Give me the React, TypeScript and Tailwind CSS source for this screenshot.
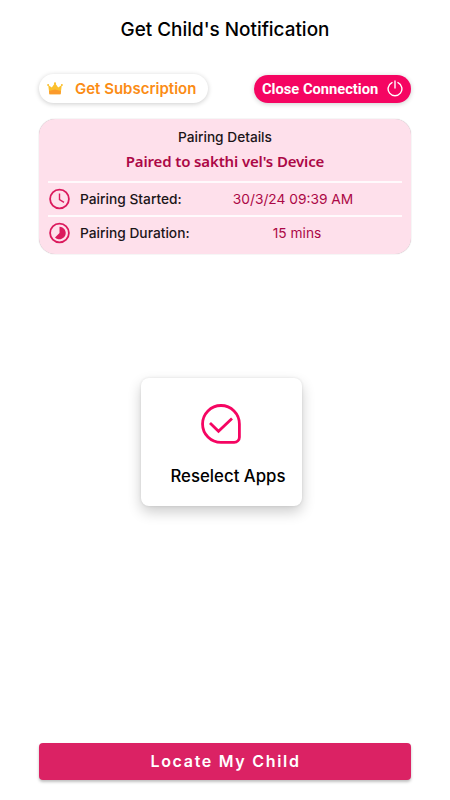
import React from 'react'

const CrownIcon = () => (
    <svg width="16" height="13" viewBox="0 0 16 13" className="shrink-0">
        <path d="M1.2 3 4.8 5.6 8 1l3.2 4.6L14.8 3l-1.2 9.3H2.4z" fill="#fbc02d" />
        <path d="M2 9 8 7.6 14 9l-.5 3.3h-11z" fill="#fb9a2c" />
        <circle cx="1.1" cy="3" r="1" fill="#fbc02d" />
        <circle cx="8" cy="1.3" r="1.1" fill="#fbc02d" />
        <circle cx="14.9" cy="3" r="1" fill="#fbc02d" />
    </svg>
)

const PowerIcon = () => (
    <svg width="16" height="17" viewBox="0 0 16 17" fill="none" stroke="#fff" strokeWidth="1.4" strokeLinecap="round" className="shrink-0">
        <path d="M5 2.6A6.9 6.9 0 1 0 11 2.6" />
        <path d="M8 .9v7.2" />
    </svg>
)

const ClockIcon = () => (
    <svg width="22" height="22" viewBox="0 0 22 22" fill="none" stroke="#db1a5d" className="shrink-0">
        <circle cx="10.5" cy="11" r="9.4" strokeWidth="1.8" />
        <path d="M10.5 5.6v5.9l4.5 2.8" strokeWidth="1.4" />
    </svg>
)

const DurationIcon = () => (
    <svg width="22" height="22" viewBox="0 0 22 22" fill="none" className="shrink-0">
        <circle cx="10.5" cy="11" r="9.4" stroke="#db1a5d" strokeWidth="1.8" />
        <path d="M10.5 11V4.7A6.3 6.3 0 1 1 6 15.5z" fill="#db1a5d" />
    </svg>
)

const CheckBubbleIcon = () => (
    <svg width="40" height="40" viewBox="0 0 40 40" fill="none" stroke="#f50562" strokeWidth="2.8">
        <path d="M20 1.5A18.4 18.4 0 0 0 20 38.4H33.2A5.2 5.2 0 0 0 38.4 33.2V20A18.4 18.4 0 0 0 20 1.5z" />
        <path d="M9 19 17.5 27.2 31 14.4" />
    </svg>
)

type PairingRowProps = {
    icon: React.ReactNode
    label: string
    children: React.ReactNode
}

const PairingRow = ({ icon, label, children }: PairingRowProps) => (
    <div className="flex h-[34px] items-center border-t-2 border-[#fffafc] pl-px text-[13.75px] whitespace-nowrap">
        {icon}
        <span className="mt-px ml-[9px] w-[122px] font-medium text-[#1c1519]">{label}</span>
        <span className="mt-px w-[182px] text-center text-[#ac0846]">{children}</span>
    </div>
)

const App = () => {
    return (
        <div className="flex h-[800px] w-[450px] flex-col bg-white px-[39px] font-['Inter',sans-serif]">
            <h1 className="mt-4 h-7 text-center text-[18.9px] leading-7 font-medium whitespace-nowrap text-black">
                Get Child's Notification
            </h1>

            {/* Top actions */}
            <div className="mt-[30px] flex h-[29px] items-center justify-between whitespace-nowrap">
                <button className="flex h-[29px] w-[169px] items-center rounded-full bg-white pl-2 text-[15px] font-semibold text-[#fb8c14] shadow-[0_1px_5px_rgba(0,0,0,0.2)]">
                    <CrownIcon />
                    <span className="mt-0.5 ml-3">Get Subscription</span>
                </button>
                <button className="flex h-7 w-[157px] items-center justify-between rounded-full bg-[#f50562] pr-2 pl-2 font-['Roboto',sans-serif] text-[14.7px] font-bold text-white shadow-[0_1px_5px_rgba(0,0,0,0.2)]">
                    <span className="mt-0.5">Close Connection</span>
                    <PowerIcon />
                </button>
            </div>

            {/* Pairing card */}
            <div className="mt-4 h-[135px] rounded-2xl bg-[#fee0eb] px-[9px] shadow-[0_0_1px_rgba(0,0,0,0.35)]">
                <p className="pt-2 text-center text-[13.7px] leading-5 font-medium text-[#1c1519]">Pairing Details</p>
                <p className="mt-1 mb-[10px] text-center font-['Noto_Sans',sans-serif] text-[15px] leading-5 font-semibold tracking-[-0.14px] whitespace-nowrap text-[#ac0846]">
                    Paired to sakthi vel's Device
                </p>
                <PairingRow icon={<ClockIcon />} label="Pairing Started:">
                    30/3/24 09:39 AM
                </PairingRow>
                <PairingRow icon={<DurationIcon />} label="Pairing Duration:">
                    <span className="ml-2">15 mins</span>
                </PairingRow>
            </div>

            <div className="mt-[124px] ml-[101.5px] flex h-[128px] w-[161px] flex-col items-center rounded-lg bg-white pt-[26px] shadow-[0_6px_14px_rgba(0,0,0,0.2),0_0_3px_rgba(0,0,0,0.1)]">
                <CheckBubbleIcon />
                <span className="mt-5 ml-[14px] text-[16.8px] leading-6 font-medium whitespace-nowrap text-black">Reselect Apps</span>
            </div>

            <button className="mt-auto mb-5 flex h-[37px] shrink-0 items-center justify-center rounded bg-[#db2264] pb-px pl-px text-[16px] font-semibold tracking-[1.7px] text-white shadow-[0_2px_3px_rgba(0,0,0,0.25)]">
                Locate My Child
            </button>
        </div>
    )
}

export default App
